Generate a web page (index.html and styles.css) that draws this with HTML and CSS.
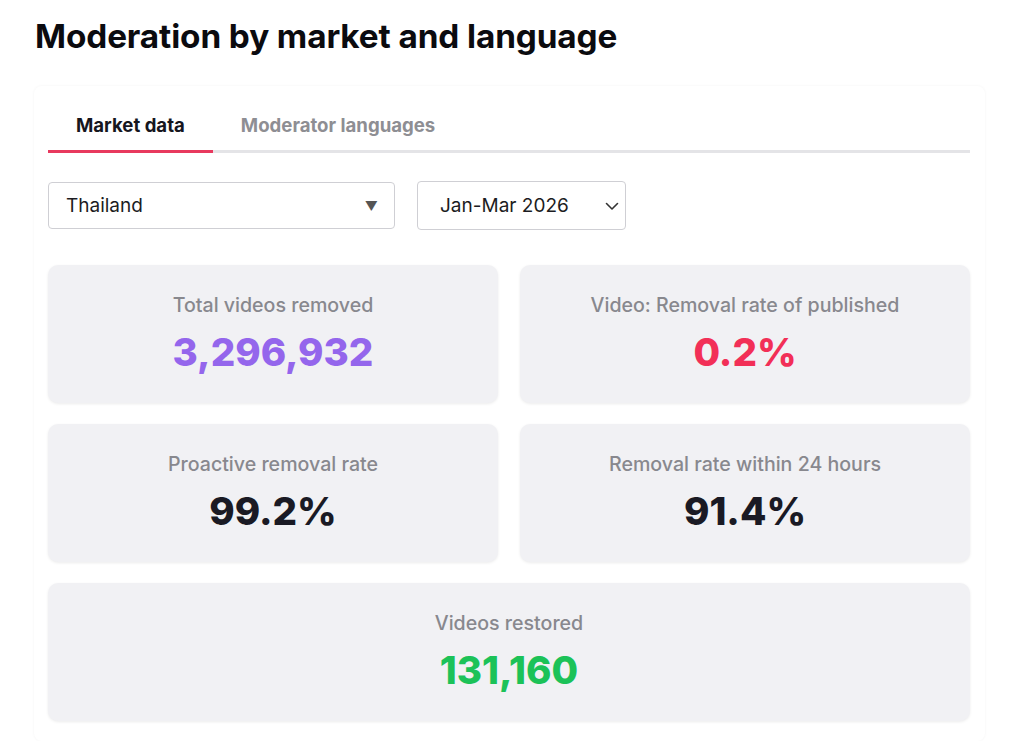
FILE: index.html
```html
<!DOCTYPE html>
<html lang="en">
<head>
<meta charset="utf-8">
<title>Moderation by market and language</title>
<link rel="stylesheet" href="styles.css">
</head>
<body>
<h1 class="title">Moderation by market and language</h1>
<section class="panel">
  <div class="tabs">
    <div class="tab active">Market data</div>
    <div class="tab">Moderator languages</div>
  </div>
  <div class="filters">
    <div class="select market">
      <span>Thailand</span>
      <span class="tri">▼</span>
    </div>
    <div class="select period">
      <span>Jan-Mar 2026</span>
      <svg class="chev" width="14" height="9" viewBox="0 0 14 9"><path d="M1.5 1.5 L7 7 L12.5 1.5" fill="none" stroke="#333" stroke-width="1.6" stroke-linecap="round" stroke-linejoin="round"/></svg>
    </div>
  </div>
  <div class="grid">
    <div class="card">
      <div class="label">Total videos removed</div>
      <div class="value purple">3,296,932</div>
    </div>
    <div class="card">
      <div class="label">Video: Removal rate of published</div>
      <div class="value red">0.2%</div>
    </div>
    <div class="card">
      <div class="label">Proactive removal rate</div>
      <div class="value dark">99.2%</div>
    </div>
    <div class="card">
      <div class="label">Removal rate within 24 hours</div>
      <div class="value dark">91.4%</div>
    </div>
    <div class="card wide">
      <div class="label">Videos restored</div>
      <div class="value green">131,160</div>
    </div>
  </div>
</section>
</body>
</html>
```
FILE: styles.css
```css
* { box-sizing: border-box; }
body {
  margin: 0;
  background: #fff;
  font-family: Inter, "Liberation Sans", Arial, sans-serif;
  color: #16161e;
}
.title {
  margin: 0;
  padding: 16px 0 0 35px;
  font-size: 33.3px;
  line-height: 40px;
  font-weight: 700;
  color: #0b0b0f;
  letter-spacing: -0.1px;
}
.panel {
  margin: 30px 39px 0 34px;
  padding: 0 15px 20px 14px;
  border-radius: 8px;
  box-shadow: 0 0 3px rgba(0,0,0,0.05);
}
.tabs {
  display: flex;
  border-bottom: 3px solid #e4e4e7;
  padding-top: 26px;
}
.tab {
  padding: 2px 28px 14px;
  font-size: 18.6px;
  line-height: 22px;
  font-weight: 700;
  color: #8e8e93;
  margin-bottom: -3px;
  border-bottom: 3px solid transparent;
}
.tab.active {
  color: #16161e;
  border-bottom-color: #e8395e;
}
.filters {
  display: flex;
  gap: 22px;
  margin-top: 28px;
  align-items: center;
}
.select {
  display: flex;
  align-items: center;
  justify-content: space-between;
  border: 1px solid #cfcfd4;
  border-radius: 4px;
  font-size: 19px;
  color: #1c1c22;
}
.market {
  width: 347px;
  height: 47px;
  padding: 0 16px 0 17px;
}
.tri {
  font-size: 13px;
  color: #555;
}
.period {
  width: 209px;
  height: 49px;
  padding: 0 6px 0 22px;
}
.chev { margin-top: 2px; }
.grid {
  display: grid;
  grid-template-columns: 1fr 1fr;
  gap: 21px 22px;
  margin-top: 35px;
}
.card {
  background: #f1f1f4;
  border-radius: 10px;
  box-shadow: 0 1px 3px rgba(0,0,0,0.08);
  height: 138px;
  padding-top: 28px;
  text-align: center;
}
.card.wide { grid-column: 1 / span 2; }
.label {
  font-size: 19.6px;
  line-height: 24px;
  font-weight: 500;
  color: #88888e;
}
.value {
  margin-top: 12px;
  font-size: 38.5px;
  line-height: 46px;
  font-weight: 800;
}
.purple { color: #9466ec; }
.red { color: #f22f57; }
.dark { color: #1a1a24; }
.green { color: #1cc258; }
```
